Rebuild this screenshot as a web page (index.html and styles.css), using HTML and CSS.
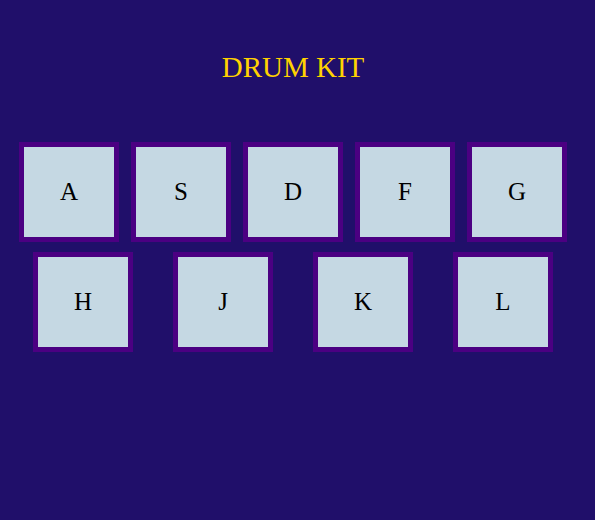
FILE: index.html
```html
<!DOCTYPE html>
<html>
<head>
<meta charset="utf-8">
<title>Drum Kit</title>
<link rel="stylesheet" href="styles.css">
</head>
<body>
<div class="page">
  <h1 class="title">DRUM KIT</h1>
  <div class="row row-top">
    <button class="key">A</button>
    <button class="key">S</button>
    <button class="key">D</button>
    <button class="key">F</button>
    <button class="key">G</button>
  </div>
  <div class="row row-bottom">
    <button class="key">H</button>
    <button class="key">J</button>
    <button class="key">K</button>
    <button class="key">L</button>
  </div>
</div>
</body>
</html>
```

FILE: styles.css
```css
html, body {
  margin: 0;
  padding: 0;
  background: #200f6a;
  height: 100%;
}
.page {
  width: 586px;
  font-family: "Liberation Serif", "Times New Roman", serif;
}
.title {
  margin: 51px 0 59px;
  font-size: 29px;
  font-weight: normal;
  line-height: 32px;
  color: #ffd200;
  text-align: center;
}
.row {
  display: flex;
  justify-content: center;
}
.row-top {
  gap: 12px;
}
.row-bottom {
  gap: 40px;
  margin-top: 10px;
}
.key {
  box-sizing: border-box;
  width: 100px;
  height: 100px;
  margin: 0;
  padding: 0;
  border: 5px solid #4b0082;
  background: #c5d8e3;
  color: #000;
  font-family: "Liberation Serif", "Times New Roman", serif;
  font-size: 25px;
  line-height: 28px;
  text-align: center;
  cursor: pointer;
}
```
